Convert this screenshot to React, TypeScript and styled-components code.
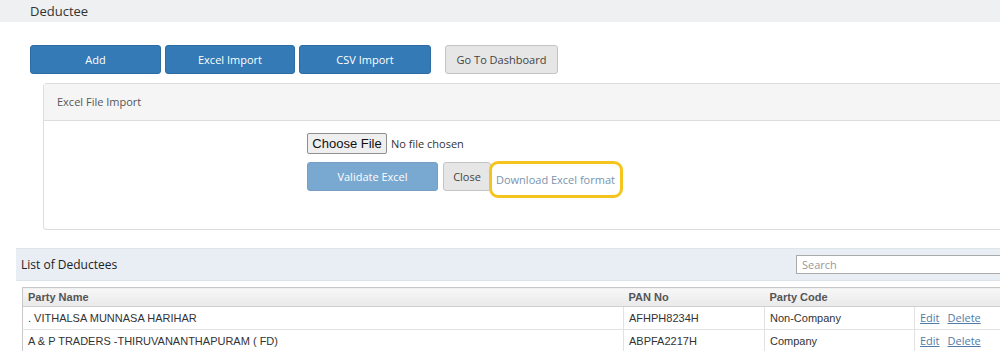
import React from "react";
import styled, { createGlobalStyle } from "styled-components";

const GlobalStyle = createGlobalStyle`
  html, body {
    margin: 0;
    padding: 0;
    background: #ffffff;
    overflow: hidden;
  }
  body {
    font-family: "Open Sans", "Noto Sans", sans-serif;
    color: #333;
  }
`;

const TopBar = styled.div`
  height: 22px;
  background: #eef0f2;
  padding-left: 30px;
  font-size: 13px;
  line-height: 22px;
  color: #333;
`;

const Content = styled.div`
  width: 1040px;
  box-sizing: border-box;
  padding: 23px 0 0 16px;
`;

const ButtonRow = styled.div`
  display: flex;
  gap: 4px;
  padding-left: 14px;
`;

const Button = styled.button<{ $variant?: "primary" | "default"; $width: number; $disabled?: boolean }>`
  width: ${(p) => p.$width}px;
  height: 29px;
  padding: 0;
  border-radius: 3px;
  font-family: "Open Sans", sans-serif;
  font-size: 11px;
  cursor: pointer;
  border: 1px solid ${(p) => (p.$variant === "primary" ? "#2e6da4" : "#c4c4c4")};
  background: ${(p) => (p.$variant === "primary" ? "#337ab7" : "#e6e6e6")};
  color: ${(p) => (p.$variant === "primary" ? "#ffffff" : "#444")};
  opacity: ${(p) => (p.$disabled ? 0.65 : 1)};
`;

const Spacer = styled.div<{ $w: number }>`
  width: ${(p) => p.$w}px;
`;

const Panel = styled.div`
  margin: 9px 0 0 27px;
  border: 1px solid #dddddd;
  border-right: none;
  border-radius: 4px 0 0 4px;
  height: 147px;
  box-sizing: border-box;
`;

const PanelHeading = styled.div`
  height: 36px;
  background: #f5f5f5;
  border-bottom: 1px solid #dddddd;
  padding-left: 13px;
  font-size: 11px;
  line-height: 36px;
  color: #555;
`;

const PanelBody = styled.div`
  padding: 12px 0 0 263px;
  display: flex;
  flex-direction: column;
  gap: 8px;
`;

const FileRow = styled.div`
  display: flex;
  align-items: center;
  gap: 4px;
  height: 21px;
`;

const FileButton = styled.button`
  height: 21px;
  width: 80px;
  padding: 0;
  border: 1px solid #8f8f8f;
  border-radius: 2px;
  background: #efefef;
  font-family: "Liberation Sans", Arial, sans-serif;
  font-size: 13px;
  color: #111;
`;

const FileLabel = styled.span`
  font-size: 11px;
  color: #333;
`;

const ActionRow = styled.div`
  display: flex;
  align-items: center;
  gap: 5px;
`;

const Highlight = styled.div`
  position: relative;
  top: 3px;
  &::after {
    content: "";
    position: absolute;
    left: -7px;
    right: -8px;
    top: -11px;
    bottom: -11px;
    border: 3px solid #f6c51d;
    border-radius: 9px;
    pointer-events: none;
  }
`;

const LinkText = styled.a`
  display: block;
  font-size: 11px;
  line-height: 15px;
  color: #7b93ad;
  text-decoration: none;
`;

const ListPanel = styled.div`
  margin-top: 18px;
  border-top: 1px solid #dfe4ea;
`;

const ListHeading = styled.div`
  height: 31px;
  background: #e9eef4;
  display: flex;
  align-items: center;
  justify-content: space-between;
  padding-left: 5px;
  border-bottom: 1px solid #dde3ea;
`;

const ListTitle = styled.span`
  font-size: 12px;
  color: #222;
`;

const SearchInput = styled.input`
  width: 230px;
  height: 19px;
  box-sizing: border-box;
  margin-right: 14px;
  border: 1px solid #aaaaaa;
  padding: 0 5px;
  font-family: "Open Sans", sans-serif;
  font-size: 11px;
  &::placeholder {
    color: #999;
  }
`;

const TableWrap = styled.div`
  padding: 6px 0 0 6px;
`;

const Table = styled.table`
  border-collapse: collapse;
  table-layout: fixed;
  width: 1020px;
  font-family: "Liberation Sans", Arial, sans-serif;
  font-size: 11px;
  border: 1px solid #c8c8c8;
`;

const HeadCell = styled.th`
  text-align: left;
  font-weight: bold;
  color: #555;
  height: 18px;
  padding: 0 5px;
  background: linear-gradient(#f7f7f7, #e9e9e9);
  border-bottom: 1px solid #d0d0d0;
`;

const Cell = styled.td`
  height: 22px;
  padding: 0 5px;
  color: #333;
  border-bottom: 1px solid #e2e2e2;
  border-left: 1px solid #e2e2e2;
  &:first-child {
    border-left: none;
  }
`;

const ActionLink = styled.a`
  font-family: "Open Sans", sans-serif;
  font-size: 11px;
  line-height: 14px;
  color: #4f7ca8;
  text-decoration: underline;
  margin-right: 8px;
`;

const rows = [
  { name: ". VITHALSA MUNNASA HARIHAR", pan: "AFHPH8234H", code: "Non-Company" },
  { name: "A & P TRADERS -THIRUVANANTHAPURAM ( FD)", pan: "ABPFA2217H", code: "Company" },
];

export default function App() {
  return (
    <>
      <GlobalStyle />
      <TopBar>Deductee</TopBar>
      <Content>
        <ButtonRow>
          <Button $variant="primary" $width={131}>Add</Button>
          <Button $variant="primary" $width={130}>Excel Import</Button>
          <Button $variant="primary" $width={132}>CSV Import</Button>
          <Spacer $w={6} />
          <Button $width={113}>Go To Dashboard</Button>
        </ButtonRow>
        <Panel>
          <PanelHeading>Excel File Import</PanelHeading>
          <PanelBody>
            <FileRow>
              <FileButton>Choose File</FileButton>
              <FileLabel>No file chosen</FileLabel>
            </FileRow>
            <ActionRow>
              <Button $variant="primary" $width={131} $disabled>
                Validate Excel
              </Button>
              <Button $width={48}>Close</Button>
              <Highlight>
                <LinkText href="#">Download Excel format</LinkText>
              </Highlight>
            </ActionRow>
          </PanelBody>
        </Panel>
        <ListPanel>
          <ListHeading>
            <ListTitle>List of Deductees</ListTitle>
            <SearchInput placeholder="Search" />
          </ListHeading>
          <TableWrap>
            <Table>
              <colgroup>
                <col style={{ width: 601 }} />
                <col style={{ width: 141 }} />
                <col style={{ width: 150 }} />
                <col />
              </colgroup>
              <thead>
                <tr>
                  <HeadCell>Party Name</HeadCell>
                  <HeadCell>PAN No</HeadCell>
                  <HeadCell>Party Code</HeadCell>
                  <HeadCell />
                </tr>
              </thead>
              <tbody>
                {rows.map((r) => (
                  <tr key={r.pan}>
                    <Cell>{r.name}</Cell>
                    <Cell>{r.pan}</Cell>
                    <Cell>{r.code}</Cell>
                    <Cell>
                      <ActionLink href="#">Edit</ActionLink>
                      <ActionLink href="#">Delete</ActionLink>
                    </Cell>
                  </tr>
                ))}
              </tbody>
            </Table>
          </TableWrap>
        </ListPanel>
      </Content>
    </>
  );
}
